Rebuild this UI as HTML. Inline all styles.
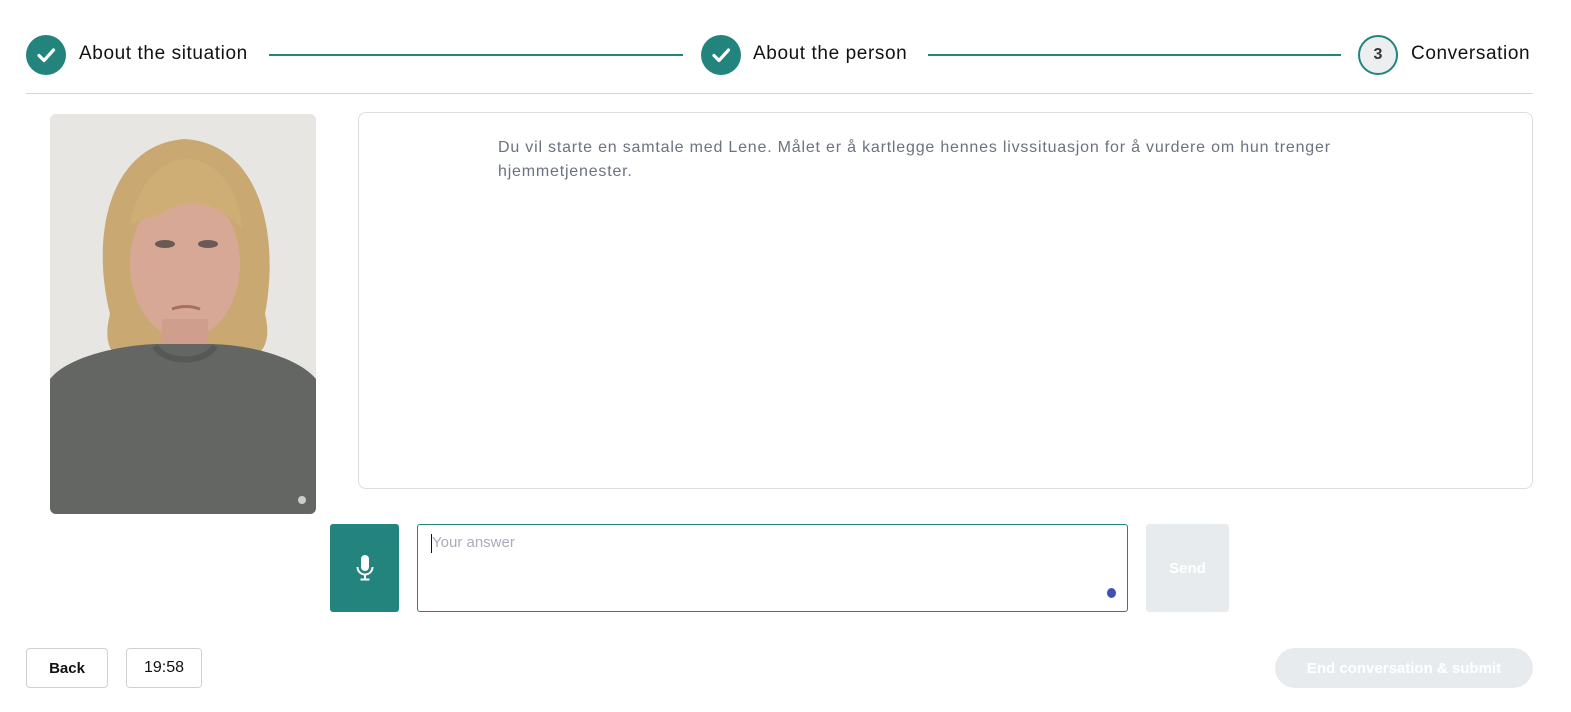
<!DOCTYPE html>
<html><head><meta charset="utf-8">
<style>
*{box-sizing:border-box;margin:0;padding:0}
body{width:1571px;height:712px;background:#fff;font-family:"Liberation Sans",sans-serif;position:relative;overflow:hidden;color:#111}
.abs{position:absolute}
.chk{width:40px;height:40px;border-radius:50%;background:#22847d;display:flex;align-items:center;justify-content:center}
.lbl{font-size:19px;letter-spacing:0.6px;color:#111;top:43px}
.line{height:2px;background:#22847d;top:54px}
</style></head><body>
<div class="abs chk" style="left:26px;top:35px"><svg width="22" height="22" viewBox="0 0 22 22"><path d="M4 11.5l5 5L18.5 6" stroke="#fff" stroke-width="3.2" fill="none" stroke-linecap="round" stroke-linejoin="round"/></svg></div>
<div class="abs lbl" style="left:79px">About the situation</div>
<div class="abs line" style="left:269px;width:414px"></div>
<div class="abs chk" style="left:701px;top:35px"><svg width="22" height="22" viewBox="0 0 22 22"><path d="M4 11.5l5 5L18.5 6" stroke="#fff" stroke-width="3.2" fill="none" stroke-linecap="round" stroke-linejoin="round"/></svg></div>
<div class="abs lbl" style="left:753px">About the person</div>
<div class="abs line" style="left:928px;width:413px"></div>
<div class="abs" style="left:1358px;top:35px;width:40px;height:40px;border-radius:50%;border:2px solid #22847d;background:#eceef0;display:flex;align-items:center;justify-content:center;font-weight:bold;font-size:16px;color:#333">3</div>
<div class="abs lbl" style="left:1411px">Conversation</div>
<div class="abs" style="left:26px;top:93px;width:1507px;height:1px;background:#d4d4d8"></div>

<div class="abs" style="left:50px;top:114px;width:266px;height:400px;border-radius:6px;overflow:hidden;background:#e6e5e2">
<svg width="266" height="400" viewBox="0 0 266 400">
<rect width="266" height="400" fill="#e7e6e3"/>
<path d="M60 200 C40 120 60 30 135 25 C210 30 230 120 215 200 C225 240 200 250 185 240 L90 240 C70 250 50 240 60 200Z" fill="#c9a971"/>
<ellipse cx="135" cy="150" rx="55" ry="75" fill="#d8a896"/>
<path d="M80 110 C90 60 120 45 135 45 C170 45 190 80 192 115 C170 90 140 80 110 100Z" fill="#cfae76"/>
<rect x="112" y="205" width="46" height="50" fill="#cf9e8c"/>
<path d="M0 265 C20 240 80 230 110 230 L160 230 C190 230 245 240 266 265 L266 400 L0 400Z" fill="#636663"/>
<path d="M105 232 C115 250 155 250 165 232" stroke="#555855" stroke-width="6" fill="none"/>
<ellipse cx="115" cy="130" rx="10" ry="4" fill="#6b5a54"/><ellipse cx="158" cy="130" rx="10" ry="4" fill="#6b5a54"/>
<path d="M122 195 Q136 190 150 195" stroke="#a56f66" stroke-width="3" fill="none"/>
<circle cx="252" cy="386" r="4" fill="#ccc"/>
</svg></div>

<div class="abs" style="left:358px;top:112px;width:1175px;height:377px;border:1px solid #dcdde0;border-radius:8px"></div>
<div class="abs" style="left:498px;top:136px;width:850px;font-size:16px;letter-spacing:0.8px;line-height:24px;color:#6b7280">Du vil starte en samtale med Lene. Målet er å kartlegge hennes livssituasjon for å vurdere om hun trenger hjemmetjenester.</div>

<div class="abs" style="left:330px;top:524px;width:69px;height:88px;background:#22847d;border-radius:3px;display:flex;align-items:center;justify-content:center">
<svg width="18" height="28" viewBox="0 0 18 28"><rect x="5" y="1" width="8" height="16" rx="4" fill="#fff"/><path d="M1.5 13a7.5 7.5 0 0 0 15 0" stroke="#fff" stroke-width="2" fill="none"/><path d="M9 20.5v4M4.5 25.5h9" stroke="#fff" stroke-width="2"/></svg></div>
<div class="abs" style="left:417px;top:524px;width:711px;height:88px;border:1px solid #22847d;border-radius:3px"></div>
<div class="abs" style="left:431px;top:534px;width:1px;height:19px;background:#111"></div>
<div class="abs" style="left:432px;top:534px;font-size:15px;color:#a8adb7">Your answer</div>
<div class="abs" style="left:1107px;top:588px;width:9px;height:10px;border-radius:50%;background:#3f51b5"></div>
<div class="abs" style="left:1146px;top:524px;width:83px;height:88px;background:#e8ebee;border-radius:3px;display:flex;align-items:center;justify-content:center;color:#fff;font-weight:bold;font-size:15px">Send</div>

<div class="abs" style="left:26px;top:648px;width:82px;height:40px;border:1px solid #cfd1d4;border-radius:4px;display:flex;align-items:center;justify-content:center;font-weight:bold;font-size:15px">Back</div>
<div class="abs" style="left:126px;top:648px;width:76px;height:40px;border:1px solid #cfd1d4;border-radius:4px;display:flex;align-items:center;justify-content:center;font-size:16px">19:58</div>
<div class="abs" style="left:1275px;top:648px;width:258px;height:40px;background:#e8ebee;border-radius:20px;display:flex;align-items:center;justify-content:center;color:#fff;font-weight:bold;font-size:15px">End conversation &amp; submit</div>
</body></html>
